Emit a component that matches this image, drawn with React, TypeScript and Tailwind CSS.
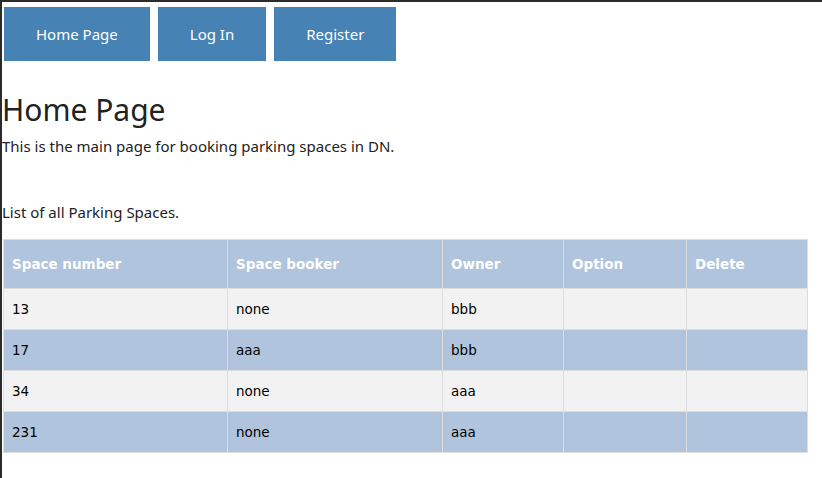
const NAV = ["Home Page", "Log In", "Register"];

const SPACES = [
  { number: "13", booker: "none", owner: "bbb" },
  { number: "17", booker: "aaa", owner: "bbb" },
  { number: "34", booker: "none", owner: "aaa" },
  { number: "231", booker: "none", owner: "aaa" },
];

const COLUMNS = ["Space number", "Space booker", "Owner", "Option", "Delete"];
const WIDTHS = ["w-[224px]", "w-[215px]", "w-[121px]", "w-[123px]", "w-[121px]"];

export default function App() {
  return (
    <div className="min-h-screen border-t-2 border-l-2 border-[#2b2b2b] bg-white font-['Noto_Sans',sans-serif] text-[#222]">
      <nav className="flex gap-2 pt-[5px] pl-[2px]">
        {NAV.map((label) => (
          <button
            key={label}
            className="h-[54px] bg-[#4682b4] px-8 text-[15px] text-white"
          >
            {label}
          </button>
        ))}
      </nav>

      <h1 className="mt-[30px] text-[30px] leading-[38px]">Home Page</h1>
      <p className="mt-[6px] text-[15px] leading-[22px]">
        This is the main page for booking parking spaces in DN.
      </p>
      <p className="mt-[44px] text-[15px] leading-[22px]">
        List of all Parking Spaces.
      </p>

      <table className="mt-[16px] ml-px border-collapse font-['DejaVu_Sans',sans-serif] text-[13.5px]">
        <thead>
          <tr className="h-[49px] bg-[#b0c4de]">
            {COLUMNS.map((col, i) => (
              <th
                key={col}
                className={`${WIDTHS[i]} border border-[#dddddd] px-2 text-left font-bold text-white`}
              >
                {col}
              </th>
            ))}
          </tr>
        </thead>
        <tbody>
          {SPACES.map((s, i) => (
            <tr
              key={s.number}
              className={`h-[41px] ${i % 2 === 0 ? "bg-[#f2f2f2]" : "bg-[#b0c4de]"} text-black`}
            >
              <td className="border border-[#dddddd] px-2">{s.number}</td>
              <td className="border border-[#dddddd] px-2">{s.booker}</td>
              <td className="border border-[#dddddd] px-2">{s.owner}</td>
              <td className="border border-[#dddddd] px-2"></td>
              <td className="border border-[#dddddd] px-2"></td>
            </tr>
          ))}
        </tbody>
      </table>
    </div>
  );
}
